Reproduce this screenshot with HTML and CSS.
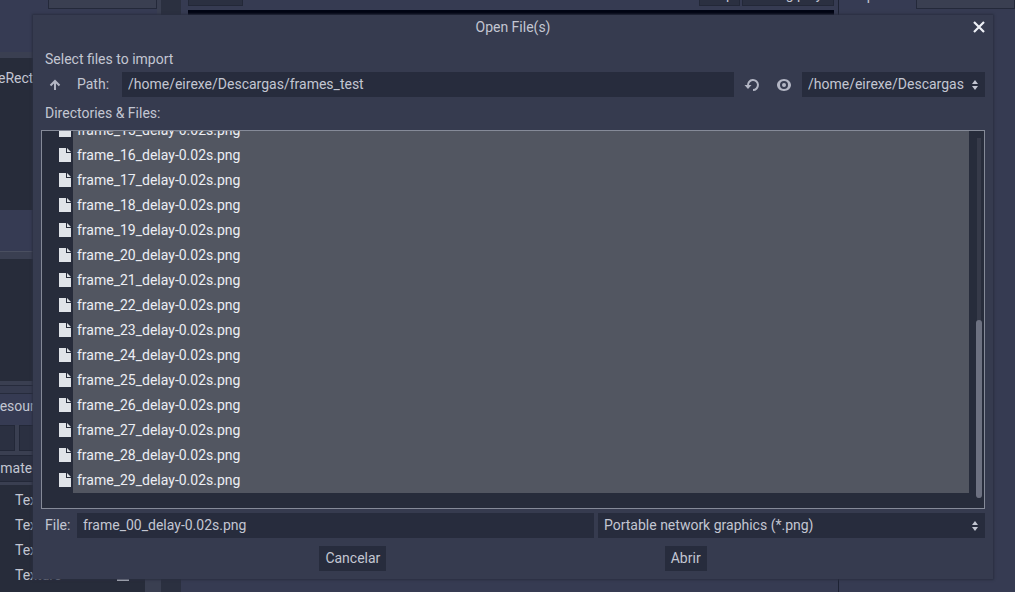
FILE: index.html
```html
<!DOCTYPE html>
<html lang="es">
<head>
    <meta charset="UTF-8">
    <meta name="viewport" content="width=device-width, initial-scale=1.0">
    <title>Open File(s)</title>
    <link rel="stylesheet" href="styles.css">
</head>
<body>
    <!-- Editor -->
    <div class="editor" aria-hidden="true">
        <div class="dock dock-left">
            <div class="dock-tabs"><span class="tab-active"></span><span class="tab-rest"></span></div>
            <div class="dock-tools"></div>
            <div class="tree tree-scene">TextureRect</div>
            <div class="dock-middle"></div>
            <div class="tree tree-files"><span>Library</span></div>
            <div class="dock-title">Resources</div>
            <div class="dock-buttons"><span></span><span></span></div>
            <div class="dock-name">Animated</div>
            <ul class="tree props">
                <li>Texture</li>
                <li>Texture</li>
                <li>Texture</li>
                <li>Texture
                    <svg width="12" height="12" viewBox="0 0 12 12"><path d="M0 0h12v12H0z" fill="#cdd1db"/><path d="M2 2h8v4H2zM2 7h2v2H2zM5 7h2v2H5zM8 7h2v2H8z" fill="#272c3a"/></svg>
                </li>
            </ul>
        </div>
        <div class="gutter"></div>
        <div class="center">
            <div class="toolbar">
                <span class="tool"></span>
                <span class="tool tool-first">Help</span>
                <span class="tool">Debug play</span>
            </div>
            <div class="viewport"></div>
            <div class="bottom-panel"></div>
        </div>
        <div class="dock dock-right">
            <div class="dock-tabs"><span class="tab-active">Inspector</span><span class="tab-rest"></span></div>
        </div>
    </div>

    <!-- Diálogo -->
    <main class="dialog" role="dialog" aria-labelledby="dialog-title">
        <header class="dialog-header">
            <h1 id="dialog-title">Open File(s)</h1>
            <button class="close-button" aria-label="Cerrar">
                <svg width="12" height="12" viewBox="0 0 12 12"><path d="M1 1l10 10M11 1L1 11" stroke="currentColor" stroke-width="2.2"/></svg>
            </button>
        </header>

        <p class="caption">Select files to import</p>
        <div class="row">
            <button class="icon-button" aria-label="Subir">
                <svg width="16" height="16" viewBox="0 0 16 16" fill="none" stroke="currentColor" stroke-width="2"><path d="M8 13V4M3.500 8.500L8 4l4.500 4.500"/></svg>
            </button>
            <label class="path-label" for="path">Path:</label>
            <input class="field" type="text" id="path" value="/home/eirexe/Descargas/frames_test">
            <button class="icon-button" aria-label="Recargar">
                <svg width="16" height="16" viewBox="0 0 16 16"><path d="M4 8.500A5 5 0 1 1 9 13" fill="none" stroke="currentColor" stroke-width="2"/><path d="M.5 8h7L4 12z" fill="currentColor"/></svg>
            </button>
            <button class="icon-button" aria-label="Mostrar ocultos">
                <svg width="16" height="16" viewBox="0 0 16 16"><path d="M8 2C4 2 1 5 1 8s3 6 7 6 7-3 7-6-3-6-7-6zm0 2a4 4 0 1 1 0 8 4 4 0 0 1 0-8z" fill="currentColor" fill-rule="evenodd"/><circle cx="8" cy="8" r="2" fill="currentColor"/></svg>
            </button>
            <div class="select drive">
                <select aria-label="Directorio">
                    <option>/home/eirexe/Descargas</option>
                </select>
                <svg width="8" height="12" viewBox="0 0 8 12"><path d="M4 1l3 4H1zM4 11L1 7h6z" fill="currentColor"/></svg>
            </div>
        </div>

        <p class="caption list-caption">Directories &amp; Files:</p>
        <div class="file-list">
            <ul class="files">
                <li><svg class="file-icon"><use href="#file"/></svg><span>frame_15_delay-0.02s.png</span></li>
                <li><svg class="file-icon"><use href="#file"/></svg><span>frame_16_delay-0.02s.png</span></li>
                <li><svg class="file-icon"><use href="#file"/></svg><span>frame_17_delay-0.02s.png</span></li>
                <li><svg class="file-icon"><use href="#file"/></svg><span>frame_18_delay-0.02s.png</span></li>
                <li><svg class="file-icon"><use href="#file"/></svg><span>frame_19_delay-0.02s.png</span></li>
                <li><svg class="file-icon"><use href="#file"/></svg><span>frame_20_delay-0.02s.png</span></li>
                <li><svg class="file-icon"><use href="#file"/></svg><span>frame_21_delay-0.02s.png</span></li>
                <li><svg class="file-icon"><use href="#file"/></svg><span>frame_22_delay-0.02s.png</span></li>
                <li><svg class="file-icon"><use href="#file"/></svg><span>frame_23_delay-0.02s.png</span></li>
                <li><svg class="file-icon"><use href="#file"/></svg><span>frame_24_delay-0.02s.png</span></li>
                <li><svg class="file-icon"><use href="#file"/></svg><span>frame_25_delay-0.02s.png</span></li>
                <li><svg class="file-icon"><use href="#file"/></svg><span>frame_26_delay-0.02s.png</span></li>
                <li><svg class="file-icon"><use href="#file"/></svg><span>frame_27_delay-0.02s.png</span></li>
                <li><svg class="file-icon"><use href="#file"/></svg><span>frame_28_delay-0.02s.png</span></li>
                <li><svg class="file-icon"><use href="#file"/></svg><span>frame_29_delay-0.02s.png</span></li>
            </ul>
            <div class="scrollbar"><div class="thumb"></div></div>
        </div>

        <div class="row file-row">
            <label class="file-label" for="file-name">File:</label>
            <input class="field" type="text" id="file-name" value="frame_00_delay-0.02s.png">
            <div class="select filter">
                <select aria-label="Tipo de archivo">
                    <option>Portable network graphics (*.png)</option>
                </select>
                <svg width="8" height="12" viewBox="0 0 8 12"><path d="M4 1l3 4H1zM4 11L1 7h6z" fill="currentColor"/></svg>
            </div>
        </div>

        <div class="actions">
            <button class="btn">Cancelar</button>
            <button class="btn">Abrir</button>
        </div>
    </main>

    <svg class="symbols" aria-hidden="true">
        <symbol id="file" viewBox="0 0 12 14"><path d="M0 0h7v5h5v9H0zM8 0l4 4H8z" fill="#e0e3e8"/></symbol>
    </svg>
</body>
</html>
```
FILE: styles.css
```css
* {
    margin: 0;
    padding: 0;
    box-sizing: border-box;
}

body {
    position: relative;
    height: 100vh;
    overflow: hidden;
    font-family: Roboto, sans-serif;
    font-size: 14px;
    line-height: 20px;
    color: #c3c6d2;
    background-color: #363b50;
}

ul {
    list-style: none;
}

button,
input,
select {
    font: inherit;
    color: inherit;
    border: none;
    border-radius: 0;
}

.symbols {
    display: none;
}

/* Editor */
.editor {
    display: flex;
    height: 100%;
    overflow: hidden;
    background-color: #3a3f51;
}

.dock {
    display: flex;
    flex-direction: column;
    background-color: #3a3f51;
}

.dock-left {
    width: 217px;
    margin-left: -60px;
    flex-shrink: 0;
}

.dock-tabs {
    display: flex;
    height: 9px;
    flex-shrink: 0;
    background-color: #363b53;
}

.tab-active {
    display: flex;
    align-items: flex-end;
    width: 108px;
}

.tab-rest {
    flex: 1;
    border: 1px solid #24293a;
    border-top: none;
    background-color: #3a3f51;
}

.dock-tools {
    height: 43px;
    background-color: #363b53;
}

.tree {
    background-color: #272c3a;
}

.tree-scene {
    height: 152px;
    margin-top: 6px;
    padding: 10px 19px;
}

.dock-middle {
    height: 42px;
    background-color: #363b53;
    border-bottom: 1px solid #4a4f60;
}

.tree-files {
    height: 122px;
    margin-top: 7px;
    padding-top: 83px;
    padding-left: 17px;
}

.dock-title {
    height: 40px;
    margin-top: 4px;
    padding: 10px 51px;
    border-top: 1px solid #262b3c;
    background: linear-gradient(#363b4f 7px, #262b3c 7px, #262b3c 8px, #363b53 8px);
}

.dock-buttons {
    display: flex;
    gap: 4px;
    height: 26px;
}

.dock-buttons span {
    width: 75px;
    border: 1px solid #232838;
    background-color: #2b3041;
}

.dock-buttons span:last-child {
    flex: 1;
}

.dock-name {
    height: 27px;
    margin-top: 4px;
    padding: 2px 39px;
    border: 1px solid #232838;
    background-color: #2b3041;
}

.props {
    flex: 1;
    margin-top: 3px;
    margin-right: 12px;
    padding-top: 2px;
    padding-left: 75px;
}

.props li {
    display: flex;
    align-items: center;
    justify-content: space-between;
    height: 25px;
    padding-right: 16px;
}

.gutter {
    width: 24px;
    flex-shrink: 0;
    border-left: 4px solid #3a3f51;
    background-color: #2b3040;
}

.center {
    display: flex;
    flex-direction: column;
    flex: 1;
    padding: 0 4px 0 7px;
    background-color: #363b52;
}

.toolbar {
    display: flex;
    align-items: flex-end;
    gap: 2px;
    height: 6px;
}

.tool {
    display: flex;
    align-items: flex-end;
    justify-content: center;
    width: 55px;
    height: 30px;
    padding-bottom: 1px;
    border: 1px solid #232838;
    background-color: #2b3041;
}

.tool:last-child {
    width: 92px;
}

.tool-first {
    width: 41px;
    margin-left: auto;
}

.viewport {
    flex: 1;
    margin-top: 4px;
    background-color: #000413;
}

.bottom-panel {
    height: 22px;
}

.dock-right {
    width: 177px;
    border-left: 1px solid #1d2233;
    background-color: #363b52;
}

.dock-right .tab-active {
    width: 77px;
    padding: 0 9px 4px;
}

/* Diálogo */
.dialog {
    position: absolute;
    top: 15px;
    right: 22px;
    bottom: 13px;
    left: 33px;
    display: flex;
    flex-direction: column;
    padding: 0 8px 8px;
    background-color: #363b4f;
    box-shadow: 0 0 2px 1px #292e40;
}

.dialog-header {
    display: flex;
    align-items: center;
    height: 24px;
    margin-bottom: 8px;
}

.dialog-header h1 {
    flex: 1;
    padding-left: 12px;
    font-size: 14px;
    font-weight: 400;
    text-align: center;
}

.close-button {
    display: flex;
    width: 12px;
    background: none;
    color: #eef0f6;
}

.caption {
    height: 25px;
    padding: 2px 4px;
}

.list-caption {
    margin: 4px 0;
}

.row {
    display: flex;
    align-items: center;
    gap: 4px;
    height: 25px;
}

.row label {
    height: 25px;
    padding: 2px 4px;
}

.icon-button {
    display: flex;
    align-items: center;
    justify-content: center;
    width: 28px;
    height: 24px;
    background: none;
    color: #b3b6c4;
}

.path-label {
    width: 45px;
}

.field {
    flex: 1;
    min-width: 0;
    height: 25px;
    padding: 0 6px 2px;
    background-color: #272c3d;
    outline: none;
}

.select {
    display: grid;
    align-items: center;
    height: 25px;
    background-color: #272c3d;
}

.select select,
.select svg {
    grid-area: 1 / 1;
}

.select select {
    width: 100%;
    height: 25px;
    padding: 0 20px 2px 6px;
    appearance: none;
    background: none;
    outline: none;
}

.select svg {
    justify-self: end;
    margin-right: 6px;
    pointer-events: none;
}

.drive {
    width: 183px;
}

/* Lista de archivos */
.file-list {
    display: flex;
    flex: 1;
    min-height: 0;
    border: 1px solid #858a98;
    background-color: #272c3b;
}

.files {
    display: flex;
    flex-direction: column;
    justify-content: flex-end;
    flex: 1;
    overflow: hidden;
    padding: 0 7px 15px 17px;
    color: #eceef4;
}

.files li {
    display: flex;
    align-items: center;
    gap: 2px;
    flex-shrink: 0;
    height: 25px;
}

.files span {
    flex: 1;
    padding-left: 4px;
    line-height: 25px;
    background-color: #525661;
}

.file-icon {
    width: 12px;
    height: 14px;
    margin-bottom: 2px;
}

.scrollbar {
    display: flex;
    align-items: flex-end;
    width: 6px;
    margin: 7px 2px 10px 0;
    background: linear-gradient(to right, transparent 1px, #363a49 1px, #363a49 5px, transparent 5px);
}

.thumb {
    width: 100%;
    height: 49.5%;
    border-radius: 3px;
    background-color: #6d7181;
}

.file-row {
    margin-top: 4px;
}

.file-label {
    width: 32px;
}

.filter {
    width: 41%;
}

.actions {
    display: flex;
    justify-content: space-evenly;
    margin-top: 8px;
}

.btn {
    height: 25px;
    padding: 0 6px 2px;
    background-color: #272c3d;
}
```
